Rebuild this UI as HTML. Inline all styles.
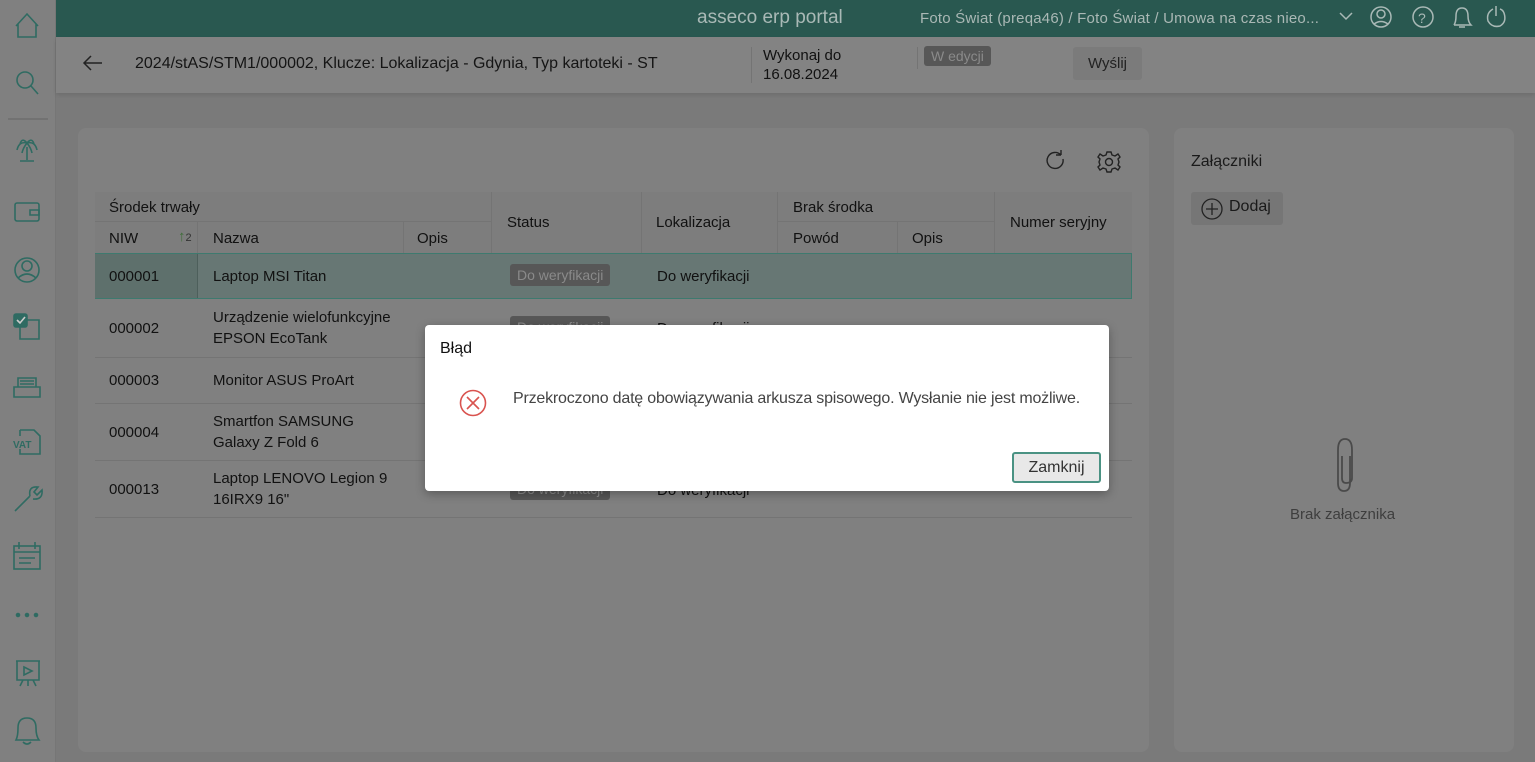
<!DOCTYPE html>
<html><head><meta charset="utf-8"><style>
*{box-sizing:border-box;margin:0;padding:0}
body{width:1535px;height:762px;overflow:hidden;background:#7a7a7a;font-family:"Liberation Sans",sans-serif;color:#111;position:relative;font-size:15px}
.abs{position:absolute}
#side{left:0;top:0;width:56px;height:762px;background:#808080;border-right:1px solid #767676}
#top{left:56px;top:0;right:0;height:37px;background:#295850;color:#aab8b5}
#hdr{left:56px;top:37px;right:0;height:56px;background:#838383;box-shadow:0 2px 4px rgba(0,0,0,.1)}
.card{background:#808080;border-radius:8px}
.t{position:absolute;white-space:nowrap}
.hl{position:absolute;background:#747474}
.badge{position:absolute;background:#575757;color:#8a8a8a;border-radius:3px;padding:3px 7px;font-size:14px}
svg{position:absolute;overflow:visible}
</style></head><body>
<div id="side" class="abs">
<svg width="56" height="762" fill="none" stroke="#2f6b62" stroke-width="1.6">
<path d="M16 26 L27 14 L38 26 M18 24 V37 H36 V24"/>
<circle cx="25" cy="80" r="8"/><path d="M31 86 L38 94"/>
<line x1="8" y1="119" x2="48" y2="119" stroke="#6e6e6e"/>
<path d="M27 147 V160 M20 161 H34 M17 150 Q19 141 27 143 Q35 141 37 150 M20 144 Q22 137 27 143 Q32 137 34 144 M27 143 Q23 148 22 153 M27 143 Q31 148 32 153"/>
<rect x="15" y="203" width="24" height="18" rx="2"/><path d="M30 210 H39 V215 H30Z"/>
<circle cx="27" cy="270" r="12"/><circle cx="27" cy="266" r="5"/><path d="M18 278 Q27 270 36 278"/>
<rect x="14" y="314" width="13" height="13" rx="2" fill="#2f6b62"/><path d="M17 320 L20 323 L25 317" stroke="#ccc"/><path d="M27 320 H39 V339 H20 V327"/>
<path d="M14 387 H40 V397 H14Z M18 387 V378 H36 V387 M20 381 H34 M20 384 H34"/>
<path d="M20 430 H34 L40 436 V454 H20 V449 M20 430 V436"/><text x="13" y="448" font-size="10" fill="#2f6b62" stroke="none" font-weight="bold">VAT</text>
<path d="M15 511 L30 496 M30 496 Q28 486 38 487 L34 492 L37 495 L42 490 Q43 500 33 499"/>
<rect x="14" y="546" width="26" height="23"/><path d="M14 552 H40 M19 542 V549 M35 542 V549 M19 558 H35 M19 563 H31"/>
<circle cx="18" cy="615" r="1.5" fill="#2f6b62"/><circle cx="27" cy="615" r="1.5" fill="#2f6b62"/><circle cx="36" cy="615" r="1.5" fill="#2f6b62"/>
<path d="M16 661 H40 M17 661 V680 H39 V661 M24 667 L32 671 L24 675Z M23 680 L20 686 M33 680 L36 686 M28 680 V686"/>
<path d="M16 740 Q18 736 18 728 Q18 718 27 718 Q36 718 36 728 Q36 736 39 740Z M23 742 Q27 746 31 742"/>
</svg>
</div>
<div id="top" class="abs">
<div class="t" style="left:641px;top:7px;font-size:19px;color:#a9b9b6">asseco erp portal</div>
<div class="t" style="left:864px;top:10px;font-size:15px;letter-spacing:0.2px;color:#aab8b5">Foto Świat (preqa46) / Foto Świat / Umowa na czas nieo...</div>
<svg width="1479" height="37" fill="none" stroke="#a9b9b6" stroke-width="1.5">
<path d="M1284 13 L1290 19 L1296 13"/>
<circle cx="1325" cy="17" r="10"/><circle cx="1325" cy="14" r="4"/><path d="M1318 24 Q1325 19 1332 24"/>
<circle cx="1367" cy="17" r="10"/><text x="1362" y="23" font-size="14" fill="#a9b9b6" stroke="none">?</text>
<path d="M1398 25 H1415 Q1412 22 1412 16 Q1412 8 1406 8 Q1400 8 1400 16 Q1400 22 1398 25 M1403 27 H1409"/>
<path d="M1437 9 Q1430 13 1432 21 Q1436 28 1444 26 Q1451 22 1448 13 Q1447 10 1444 9 M1440 6 V16"/>
</svg>
</div>
<div id="hdr" class="abs">
<svg width="60" height="56" fill="none" stroke="#222" stroke-width="1.5"><path d="M29 26 H46 M35 19 L28 26 L35 33"/></svg>
<div class="t" style="left:79px;top:18px;font-size:16px;color:#151515">2024/stAS/STM1/000002, Klucze: Lokalizacja - Gdynia, Typ kartoteki - ST</div>
<div class="hl" style="left:695px;top:10px;width:1px;height:36px"></div>
<div class="t" style="left:707px;top:9px;font-size:15px;line-height:19px;color:#111">Wykonaj do<br>16.08.2024</div>
<div class="hl" style="left:861px;top:10px;width:1px;height:22px"></div>
<div class="badge" style="left:868px;top:9px;font-size:14px;padding:2px 7px">W edycji</div>
<div class="abs" style="left:1017px;top:10px;width:69px;height:33px;background:#7b7b7b;border-radius:3px;font-size:15px;text-align:center;line-height:33px;color:#222">Wyślij</div>
</div>
<div class="abs card" style="left:78px;top:128px;width:1071px;height:624px">
<svg width="1071" height="100" fill="none" stroke="#222" stroke-width="1.4">
<path d="M983 27 A8 8 0 1 0 985 31 M983 27 V22 M983 27 H978"/>
<circle cx="1031" cy="34" r="3.5"/>
<path d="M1029 24 L1033 24 L1034 27 L1037 28 L1040 26 L1042 29 L1040 31 L1041 34 L1040 37 L1042 39 L1040 42 L1037 40 L1034 41 L1033 44 L1029 44 L1028 41 L1025 40 L1022 42 L1020 39 L1022 37 L1021 34 L1022 31 L1020 29 L1022 26 L1025 28 L1028 27 Z"/>
</svg>
</div>
<div class="abs card" style="left:1174px;top:128px;width:340px;height:624px">
<div class="t" style="left:17px;top:25px;font-size:16px;color:#1a1a1a">Załączniki</div>
<div class="abs" style="left:17px;top:64px;width:92px;height:33px;background:#767676;border-radius:3px"></div>
<svg width="340" height="400" fill="none" stroke="#222" stroke-width="1.3"><circle cx="38" cy="81" r="10"/><path d="M38 75 V87 M32 81 H44"/>
<path d="M176 328 V355 Q176 363 170 363 Q164 363 164 355 V322 Q164 311 171 311 Q178 311 178 322 V350 Q178 355 172 355 Q168 355 168 350 V328" stroke="#4a4a4a" stroke-width="1.8"/></svg>
<div class="t" style="left:55px;top:70px;font-size:16px;color:#1a1a1a">Dodaj</div>
<div class="t" style="left:116px;top:378px;font-size:15px;color:#3e3e3e">Brak załącznika</div>
</div>
<!-- table -->
<div class="abs" style="left:95px;top:192px;width:1037px;height:61px;background:#7d7d7d"></div>
<div class="hl" style="left:95px;top:221px;width:396px;height:1px"></div>
<div class="hl" style="left:777px;top:221px;width:217px;height:1px"></div>
<div class="hl" style="left:491px;top:192px;width:1px;height:61px"></div>
<div class="hl" style="left:641px;top:192px;width:1px;height:61px"></div>
<div class="hl" style="left:777px;top:192px;width:1px;height:61px"></div>
<div class="hl" style="left:994px;top:192px;width:1px;height:61px"></div>
<div class="hl" style="left:197px;top:222px;width:1px;height:31px"></div>
<div class="hl" style="left:403px;top:222px;width:1px;height:31px"></div>
<div class="hl" style="left:897px;top:222px;width:1px;height:31px"></div>
<div class="t" style="left:109px;top:199px">Środek trwały</div>
<div class="t" style="left:109px;top:230px">NIW</div>
<div class="t" style="left:178px;top:228px;color:#3f6e3a;font-size:15px">↑<span style="font-size:11px;color:#333">2</span></div>
<div class="t" style="left:213px;top:230px">Nazwa</div>
<div class="t" style="left:417px;top:230px">Opis</div>
<div class="t" style="left:507px;top:214px">Status</div>
<div class="t" style="left:656px;top:214px">Lokalizacja</div>
<div class="t" style="left:793px;top:199px">Brak środka</div>
<div class="t" style="left:793px;top:230px">Powód</div>
<div class="t" style="left:912px;top:230px">Opis</div>
<div class="t" style="left:1010px;top:214px">Numer seryjny</div>
<div class="abs" style="left:95px;top:253px;width:1037px;height:46px;background:#677774;border:1px solid #3e7a6f"></div>
<div class="abs" style="left:95px;top:254px;width:103px;height:44px;background:#5e706c;border-right:1px solid #4d5f5b"></div>
<div class="t" style="left:109px;top:268px">000001</div>
<div class="t" style="left:213px;top:268px">Laptop MSI Titan</div>
<div class="badge" style="left:510px;top:264px">Do weryfikacji</div>
<div class="t" style="left:657px;top:268px">Do weryfikacji</div>
<div class="hl" style="left:95px;top:357px;width:1037px;height:1px"></div>
<div class="hl" style="left:95px;top:403px;width:1037px;height:1px"></div>
<div class="hl" style="left:95px;top:460px;width:1037px;height:1px"></div>
<div class="hl" style="left:95px;top:517px;width:1037px;height:1px"></div>
<div class="t" style="left:109px;top:320px">000002</div>
<div class="t" style="left:213px;top:307px;line-height:21px">Urządzenie wielofunkcyjne<br>EPSON EcoTank</div>
<div class="badge" style="left:510px;top:316px">Do weryfikacji</div>
<div class="t" style="left:657px;top:320px">Do weryfikacji</div>
<div class="t" style="left:109px;top:372px">000003</div>
<div class="t" style="left:213px;top:372px">Monitor ASUS ProArt</div>
<div class="t" style="left:109px;top:424px">000004</div>
<div class="t" style="left:213px;top:411px;line-height:21px">Smartfon SAMSUNG<br>Galaxy Z Fold 6</div>
<div class="t" style="left:109px;top:481px">000013</div>
<div class="t" style="left:213px;top:468px;line-height:21px">Laptop LENOVO Legion 9<br>16IRX9 16"</div>
<div class="badge" style="left:510px;top:478px">Do weryfikacji</div>
<div class="t" style="left:657px;top:482px">Do weryfikacji</div>
<!-- dialog -->
<div class="abs" style="left:425px;top:325px;width:684px;height:166px;background:#fff;border-radius:4px;box-shadow:0 3px 10px rgba(0,0,0,.3)">
<div class="t" style="left:15px;top:15px;font-size:16px;color:#111">Błąd</div>
<svg width="684" height="166" fill="none" stroke="#d9534f" stroke-width="1.6"><circle cx="48" cy="78" r="12.5"/><path d="M42 72 L54 84 M54 72 L42 84"/></svg>
<div class="t" style="left:88px;top:65px;font-size:16px;letter-spacing:-0.2px;color:#444">Przekroczono datę obowiązywania arkusza spisowego. Wysłanie nie jest możliwe.</div>
<div class="abs" style="left:587px;top:127px;width:89px;height:31px;border:2px solid #4a9283;border-radius:3px;background:#e8e8e8;text-align:center;line-height:27px;font-size:16px;color:#333">Zamknij</div>
</div>
</body></html>
